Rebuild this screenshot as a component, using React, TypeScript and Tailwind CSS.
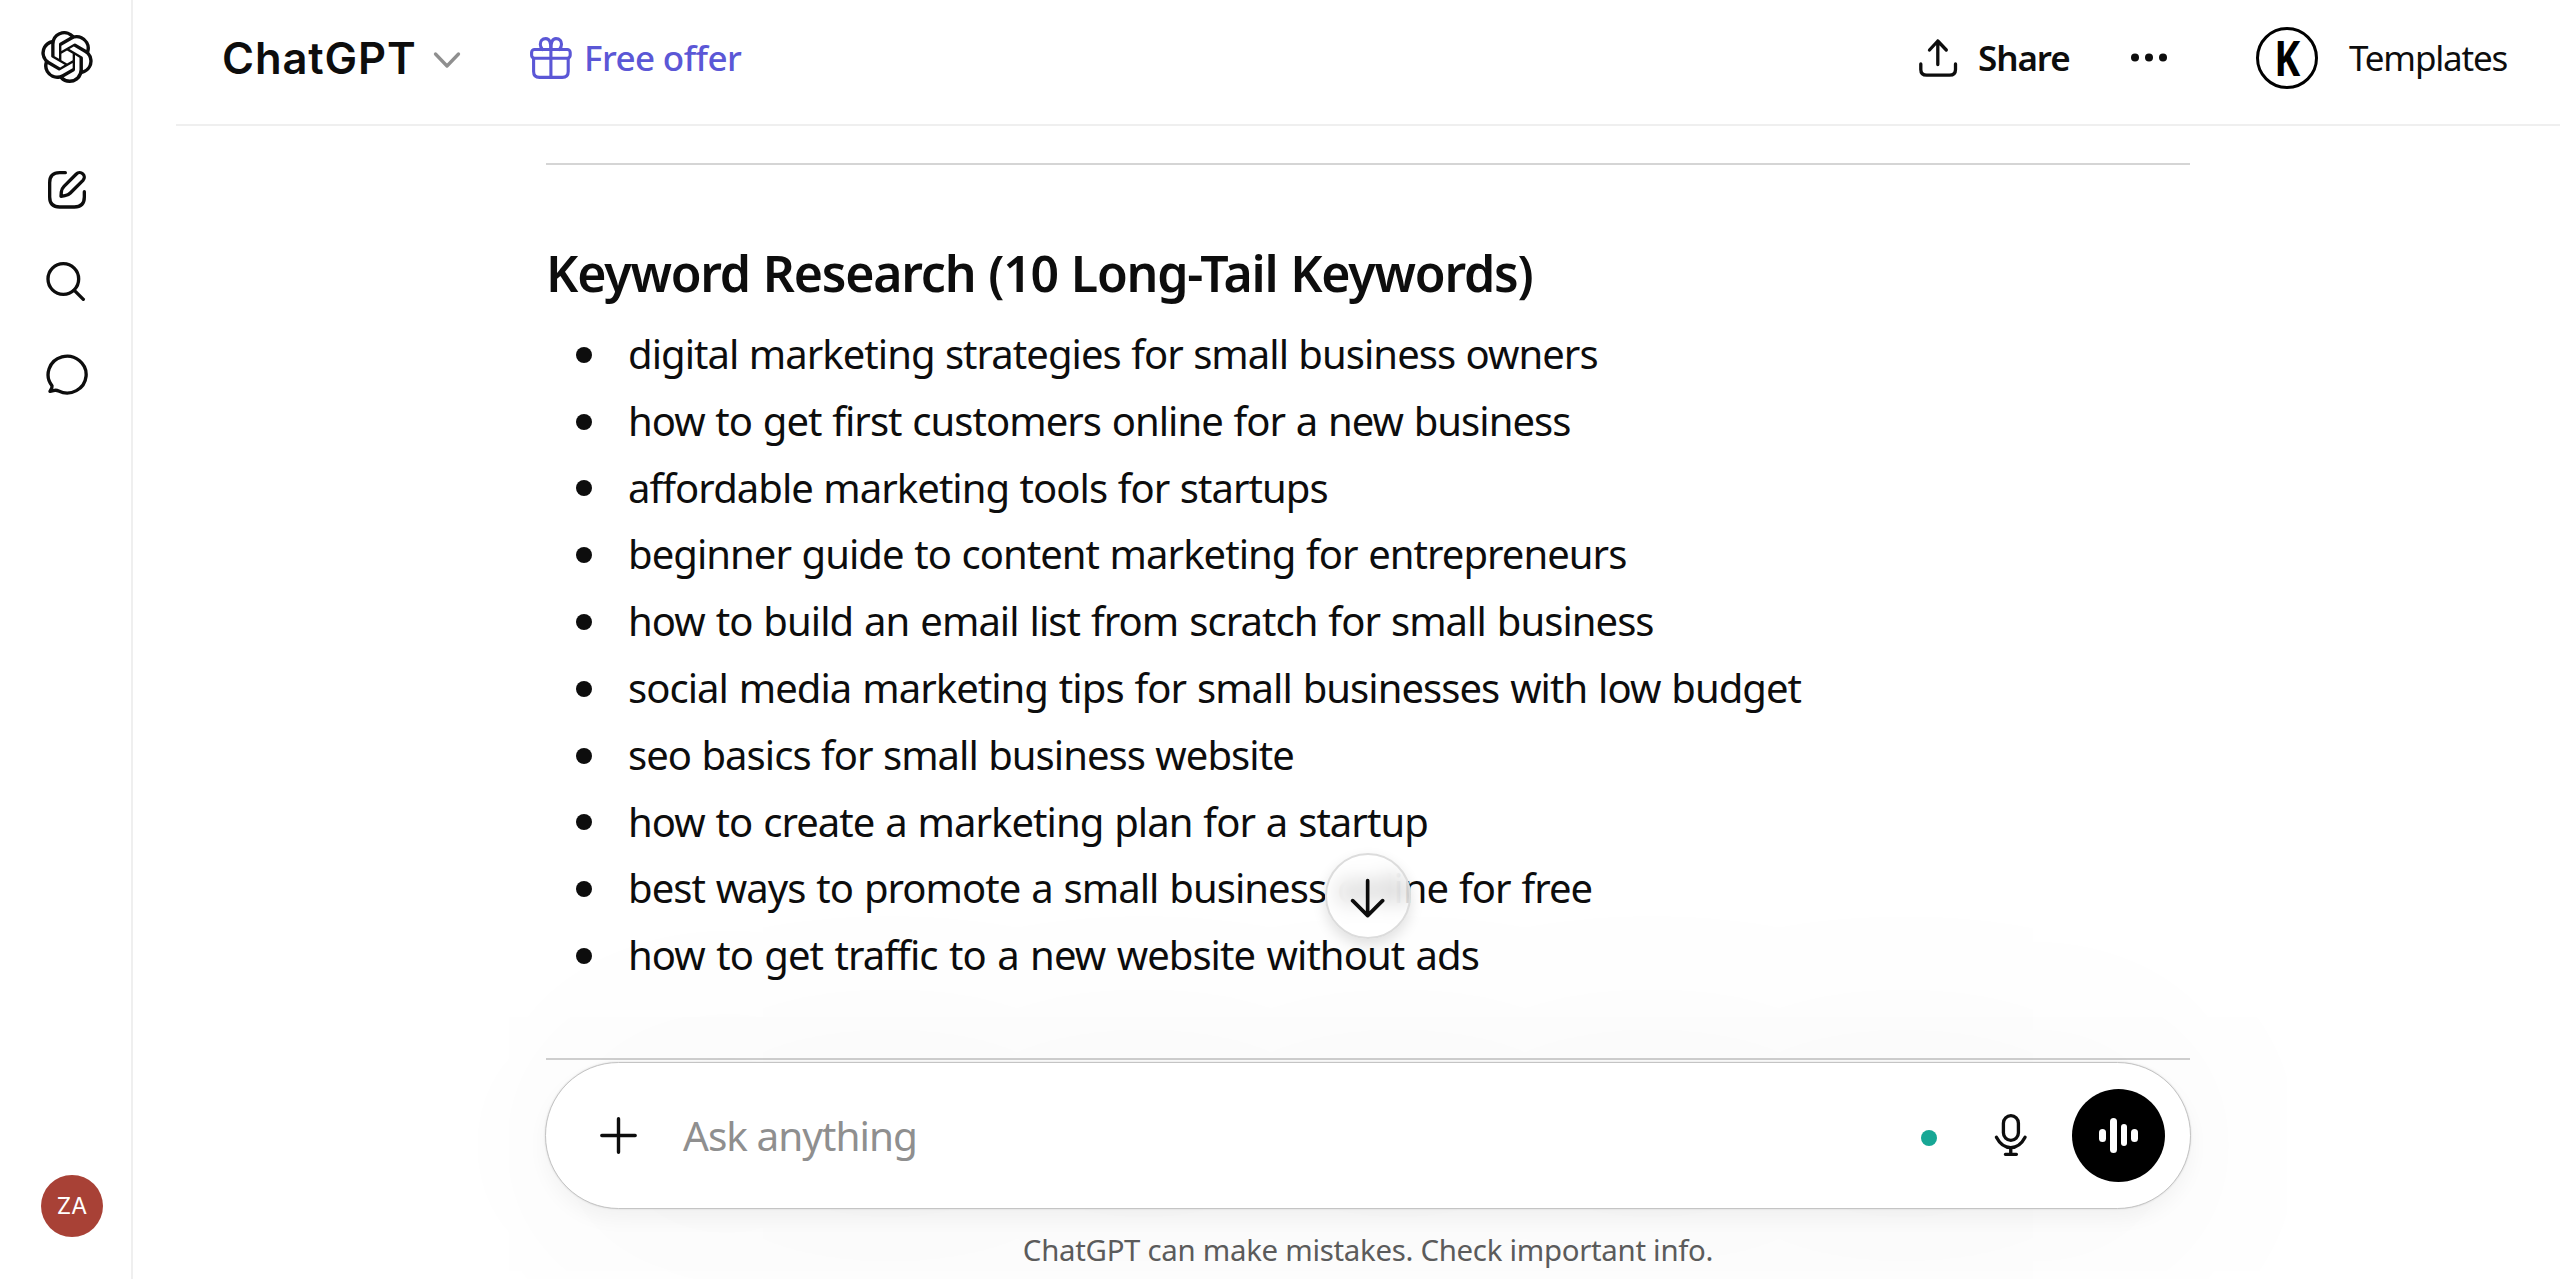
import type { ReactNode } from 'react';
import { SiOpenai } from 'react-icons/si';

interface Keyword {
  text: string;
  spacing: string;
}

const KEYWORDS: Keyword[] = [
  { text: 'digital marketing strategies for small business owners', spacing: '[word-spacing:0.9px]' },
  { text: 'how to get first customers online for a new business', spacing: '[word-spacing:1.2px]' },
  { text: 'affordable marketing tools for startups', spacing: '[word-spacing:1px]' },
  { text: 'beginner guide to content marketing for entrepreneurs', spacing: '[word-spacing:1.1px]' },
  { text: 'how to build an email list from scratch for small business', spacing: '[word-spacing:1.5px]' },
  { text: 'social media marketing tips for small businesses with low budget', spacing: '[word-spacing:1.4px]' },
  { text: 'seo basics for small business website', spacing: '[word-spacing:0.9px]' },
  { text: 'how to create a marketing plan for a startup', spacing: '[word-spacing:1.4px]' },
  { text: 'best ways to promote a small business online for free', spacing: '[word-spacing:1.4px]' },
  { text: 'how to get traffic to a new website without ads', spacing: '[word-spacing:2px]' },
];

interface IconProps {
  viewBox: string;
  stroke: number;
  className: string;
  children: ReactNode;
}

function Icon({ viewBox, stroke, className, children }: IconProps) {
  return (
    <svg
      viewBox={viewBox}
      className={`shrink-0 ${className}`}
      fill="none"
      stroke="currentColor"
      strokeWidth={stroke}
      strokeLinecap="round"
      strokeLinejoin="round"
      aria-hidden="true"
    >
      {children}
    </svg>
  );
}

function Sidebar() {
  return (
    <aside className="flex w-[133px] shrink-0 flex-col border-r-2 border-[#efefef] pt-[31px] pb-[42px]">
      <SiOpenai className="ml-[41px] size-[52px]" />
      <nav className="mt-[86px] flex flex-col">
        <button aria-label="New chat" className="ml-[46px] size-[42px]">
          <Icon viewBox="0 0 126 126" stroke={10} className="size-[42px]">
            <path d="M58 11H41C21 11 11 21 11 41V84C11 104 21 114 41 114H85C105 114 115 104 115 84V68" />
            <path d="M45 82L46 69Q47 59 54 52L91 15A13.5 13.5 0 0 1 111 34L73 72Q66 79 57 80Z" />
          </Icon>
        </button>
        <button aria-label="Search chats" className="mt-[49px] ml-[44px] size-[42px]">
          <Icon viewBox="0 0 126 126" stroke={10} className="size-[42px]">
            <circle cx="58" cy="57" r="46" />
            <path d="M91 91L118 118" />
          </Icon>
        </button>
        <button aria-label="Chats" className="mt-[52px] ml-[46px] size-[42px]">
          <Icon viewBox="0 0 126 126" stroke={10} className="size-[42px]">
            <path d="M18 95A57 55 0 1 1 38 111Q32 108 26 109L12 112L17 103Q18 99 18 95Z" />
          </Icon>
        </button>
      </nav>
      <div className="mt-auto ml-[41px] flex size-[62px] items-center justify-center rounded-full bg-[#a84136] font-['Inter',sans-serif] text-[23px] text-white">
        ZA
      </div>
    </aside>
  );
}

function Header() {
  return (
    <header className="shrink-0">
      <div className="flex h-[124px] items-center pb-[9px] pl-[89px]">
        <h1 className="w-[210px] font-['Inter',sans-serif] text-[43.5px] leading-[52px] font-semibold tracking-[0.9px]">
          ChatGPT
        </h1>
        <Icon viewBox="0 0 30 20" stroke={3.3} className="mt-[4px] h-[20px] w-[30px] text-[#8f8f8f]">
          <path d="M3.5 4L15 16L26.5 4" />
        </Icon>
        <div className="ml-[68px] flex items-center text-[#5b57d6]">
          <Icon viewBox="0 0 42 42" stroke={3.1} className="size-[42px]">
            <rect x="1.6" y="12.5" width="38.6" height="8.8" rx="3" />
            <path d="M3.6 21.3V34.5Q3.6 40.4 9.5 40.4H32.3Q38.2 40.4 38.2 34.5V21.3" />
            <path d="M20.9 12.5V40.4" />
            <path d="M20.9 12.5C21 5.5 19.5 1.6 15.8 1.6C12 1.6 10.3 4.4 10.3 7.3C10.3 9.5 11.2 11.2 12.5 12.5" />
            <path d="M20.9 12.5C20.8 5.5 22.3 1.6 26 1.6C29.8 1.6 31.5 4.4 31.5 7.3C31.5 9.5 30.6 11.2 29.3 12.5" />
          </Icon>
          <span className="mt-px ml-[12px] text-[35px] leading-[48px] font-medium tracking-[-0.6px]">Free offer</span>
        </div>

        <div className="ml-auto flex items-center">
          <Icon viewBox="0 0 40 40" stroke={3.3} className="size-[40px]">
            <path d="M2.8 26V31.5Q2.8 37.2 8.8 37.2H31.5Q37.5 37.2 37.5 31.5V26" />
            <path d="M19.8 26.5V3M11.5 12L19.8 3L28.3 12" />
          </Icon>
          <span className="mt-px ml-[20px] w-[151px] text-[35px] leading-[48px] font-semibold tracking-[-1.1px]">
            Share
          </span>
          <svg viewBox="0 0 40 40" className="size-[40px] shrink-0" fill="currentColor" aria-hidden="true">
            <circle cx="6" cy="19.5" r="4" />
            <circle cx="20" cy="19.5" r="4" />
            <circle cx="34" cy="19.5" r="4" />
          </svg>
          <div className="ml-[87px] flex size-[62px] items-center justify-center rounded-full border-[3px] border-black">
            <span className="scale-x-80 text-[49px] leading-none font-bold text-black">K</span>
          </div>
          <span className="mt-px ml-[31px] w-[211px] text-[35px] leading-[48px] tracking-[-1.2px]">Templates</span>
        </div>
      </div>
      <div className="ml-[43px] h-[2px] bg-[#efefef]" />
    </header>
  );
}

function Composer() {
  return (
    <div className="relative -mx-px mt-[2px] flex h-[147px] items-center rounded-full border border-[#c4c4c4] bg-white pl-[54px] shadow-[0_10px_20px_rgba(0,0,0,0.045),0_0_2px_rgba(0,0,0,0.15),0_10px_250px_rgba(0,0,0,0.05)]">
      <Icon viewBox="0 0 37 37" stroke={3.4} className="size-[37px]">
        <path d="M18.5 1.8V35.2M1.8 18.5H35.2" />
      </Icon>
      <span className="mt-[2px] ml-[46px] text-[40.5px] leading-[56px] tracking-[-1px] text-[#8f8f8f]">
        Ask anything
      </span>
      <span className="mt-[6px] ml-auto size-[16px] rounded-full bg-[#17a795]" />
      <Icon viewBox="0 0 106 138" stroke={10} className="ml-[56px] h-[46px] w-[35.5px]">
        <rect x="31" y="11" width="45" height="74" rx="22.5" />
        <path d="M10 76C22 99 38 107 53 107C68 107 84 99 96 76" />
        <path d="M53 107V127M37 127H70" />
      </Icon>
      <button
        aria-label="Voice mode"
        className="mr-[25px] ml-[44px] flex size-[93px] items-center justify-center gap-[4px] rounded-full bg-black"
      >
        <span className="h-[13px] w-[6.6px] rounded-full bg-white" />
        <span className="h-[35px] w-[6.6px] rounded-full bg-white" />
        <span className="h-[22px] w-[6.6px] rounded-full bg-white" />
        <span className="h-[13px] w-[6.6px] rounded-full bg-white" />
      </button>
    </div>
  );
}

export default function App() {
  return (
    <div className="flex h-[1279px] w-[2560px] overflow-hidden bg-white font-['Noto_Sans',sans-serif] text-[#0d0d0d]">
      <Sidebar />
      <main className="flex grow flex-col">
        <Header />
        <section className="relative ml-[413px] w-[1644px]">
          <hr className="mt-[37px] h-[2px] border-0 bg-[#d5d5d5]" />
          <h2 className="mt-[74px] text-[50px] leading-[68px] font-semibold tracking-[-1.2px] [word-spacing:1px]">
            Keyword Research (10 Long-Tail Keywords)
          </h2>
          <ul className="mt-[14px]">
            {KEYWORDS.map(({ text, spacing }) => (
              <li key={text} className="flex h-[66.8px] items-center pl-[30px]">
                <span className="mt-px size-[16px] rounded-full bg-[#0d0d0d]" />
                <span className={`ml-[36px] text-[40px] leading-[66.8px] tracking-[-0.95px] whitespace-nowrap ${spacing}`}>
                  {text}
                </span>
              </li>
            ))}
          </ul>
          <hr className="mt-[69px] h-[2px] border-0 bg-[#d0d0d0]" />
          <Composer />
          <p className="mt-[21px] text-center text-[29.4px] leading-[40px] tracking-[-0.29px] text-[#5d5d5d]">
            ChatGPT can make mistakes. Check important info.
          </p>

          {/* Scroll-to-bottom, floats over the message */}
          <button
            aria-label="Scroll to bottom"
            className="absolute top-[727px] left-1/2 flex size-[86px] -translate-x-1/2 items-center justify-center rounded-full border-2 border-[#dcdcdc] bg-white/65 shadow-[0_6px_14px_rgba(0,0,0,0.12)] backdrop-blur-[10px]"
          >
            <Icon viewBox="0 0 106 120" stroke={11} className="mt-[3px] h-[40px] w-[35.3px]">
              <path d="M53 8V113M8 68L53 113L98 68" />
            </Icon>
          </button>
        </section>
      </main>
    </div>
  );
}
